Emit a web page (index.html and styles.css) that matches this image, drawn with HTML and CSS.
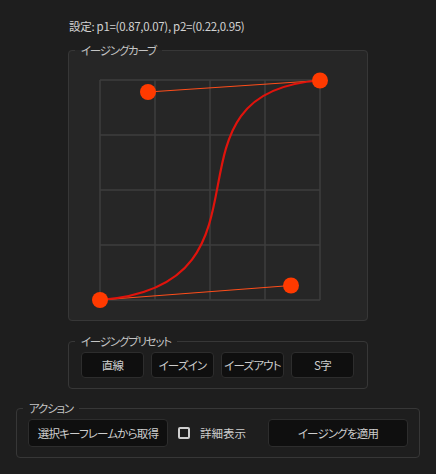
FILE: index.html
```html
<!DOCTYPE html>
<html lang="ja">
<head>
<meta charset="utf-8">
<title>イージング</title>
<link rel="stylesheet" href="styles.css">
</head>
<body>
<div class="app">
  <div class="column">
    <div class="status">設定: p1=(0.87,0.07), p2=(0.22,0.95)</div>
    <fieldset class="group curve-group">
      <legend>イージングカーブ</legend>
      <svg class="curve" width="298" height="262" viewBox="69 58 298 262">
        <g class="grid">
          <line x1="100" y1="80" x2="100" y2="300"/>
          <line x1="155" y1="80" x2="155" y2="300"/>
          <line x1="210" y1="80" x2="210" y2="300"/>
          <line x1="265" y1="80" x2="265" y2="300"/>
          <line x1="320" y1="80" x2="320" y2="300"/>
          <line x1="100" y1="80" x2="320" y2="80"/>
          <line x1="100" y1="135" x2="320" y2="135"/>
          <line x1="100" y1="190" x2="320" y2="190"/>
          <line x1="100" y1="245" x2="320" y2="245"/>
          <line x1="100" y1="300" x2="320" y2="300"/>
        </g>
        <g class="handles">
          <line x1="100" y1="300" x2="291" y2="285.5"/>
          <line x1="320" y1="80.5" x2="148" y2="92"/>
        </g>
        <path class="bezier" d="M100,300 C291,285.5 148,92 320,80.5"/>
        <g class="points">
          <circle cx="100" cy="300" r="8"/>
          <circle cx="320" cy="80.5" r="8"/>
          <circle cx="291" cy="285.5" r="8"/>
          <circle cx="148" cy="92" r="8"/>
        </g>
      </svg>
    </fieldset>
    <fieldset class="group preset-group">
      <legend>イージングプリセット</legend>
      <div class="preset-row">
        <button class="btn preset">直線</button>
        <button class="btn preset">イーズイン</button>
        <button class="btn preset">イーズアウト</button>
        <button class="btn preset">S字</button>
      </div>
    </fieldset>
  </div>
  <fieldset class="group action-group">
    <legend>アクション</legend>
    <div class="action-row">
      <button class="btn action">選択キーフレームから取得</button>
      <label class="check"><span class="box"></span>詳細表示</label>
      <button class="btn action apply">イージングを適用</button>
    </div>
  </fieldset>
</div>
</body>
</html>
```
FILE: styles.css
```css
html, body {
  margin: 0;
  padding: 0;
  background: #1e1e1e;
}
body {
  width: 436px;
  height: 474px;
  overflow: hidden;
  font-family: "Noto Sans CJK JP", "Noto Sans", sans-serif;
  font-size: 11px;
  font-feature-settings: "palt";
  color: #cfcfcf;
}
.app {
  padding-top: 18px;
  display: flex;
  flex-direction: column;
}
.column {
  width: 300px;
  margin: 0 auto;
  display: flex;
  flex-direction: column;
}
.status {
  line-height: 16px;
  padding-left: 1px;
  font-size: 11.5px;
  letter-spacing: -0.3px;
  color: #d2d2d2;
}
.group {
  margin: 0;
  padding: 0;
  border: 1px solid #373737;
  border-radius: 4px;
  min-width: 0;
}
.group legend {
  margin-left: 6px;
  padding: 0 6px;
  line-height: 16px;
  font-size: 11.5px;
  letter-spacing: -1.2px;
  color: #c4c4c4;
}
.curve-group {
  margin-top: 8px;
  background: #262626;
}
.curve {
  display: block;
}
.grid line {
  stroke: #3e3e3e;
  stroke-width: 1.5;
}
.handles line {
  stroke: #ff4d1a;
  stroke-width: 1;
}
.bezier {
  fill: none;
  stroke: #e0130c;
  stroke-width: 2.2;
}
.points circle {
  fill: #ff3a00;
}
.preset-group {
  margin-top: 12px;
}
.preset-row {
  display: flex;
  gap: 7px;
  padding: 3px 12px 10px;
}
.btn {
  font-family: inherit;
  font-size: 11.5px;
  font-feature-settings: "palt";
  letter-spacing: -0.8px;
  white-space: nowrap;
  color: #cdcdcd;
  background: #0f0f0f;
  border: 1px solid #2d2d2d;
  border-radius: 4px;
  padding: 0;
  box-sizing: border-box;
}
.preset {
  width: 63px;
  height: 26px;
}
.action-group {
  margin: 11px 16px 0;
}
.action-row {
  display: flex;
  align-items: center;
  padding: 3px 11px 10px;
}
.action {
  width: 140px;
  height: 28px;
}
.check {
  display: flex;
  align-items: center;
  margin-left: 10px;
  font-size: 11.5px;
  color: #cdcdcd;
}
.box {
  width: 12px;
  height: 12px;
  box-sizing: border-box;
  border: 2px solid #cfcfcf;
  border-radius: 2px;
  margin-right: 10px;
}
.apply {
  margin-left: auto;
}
```
